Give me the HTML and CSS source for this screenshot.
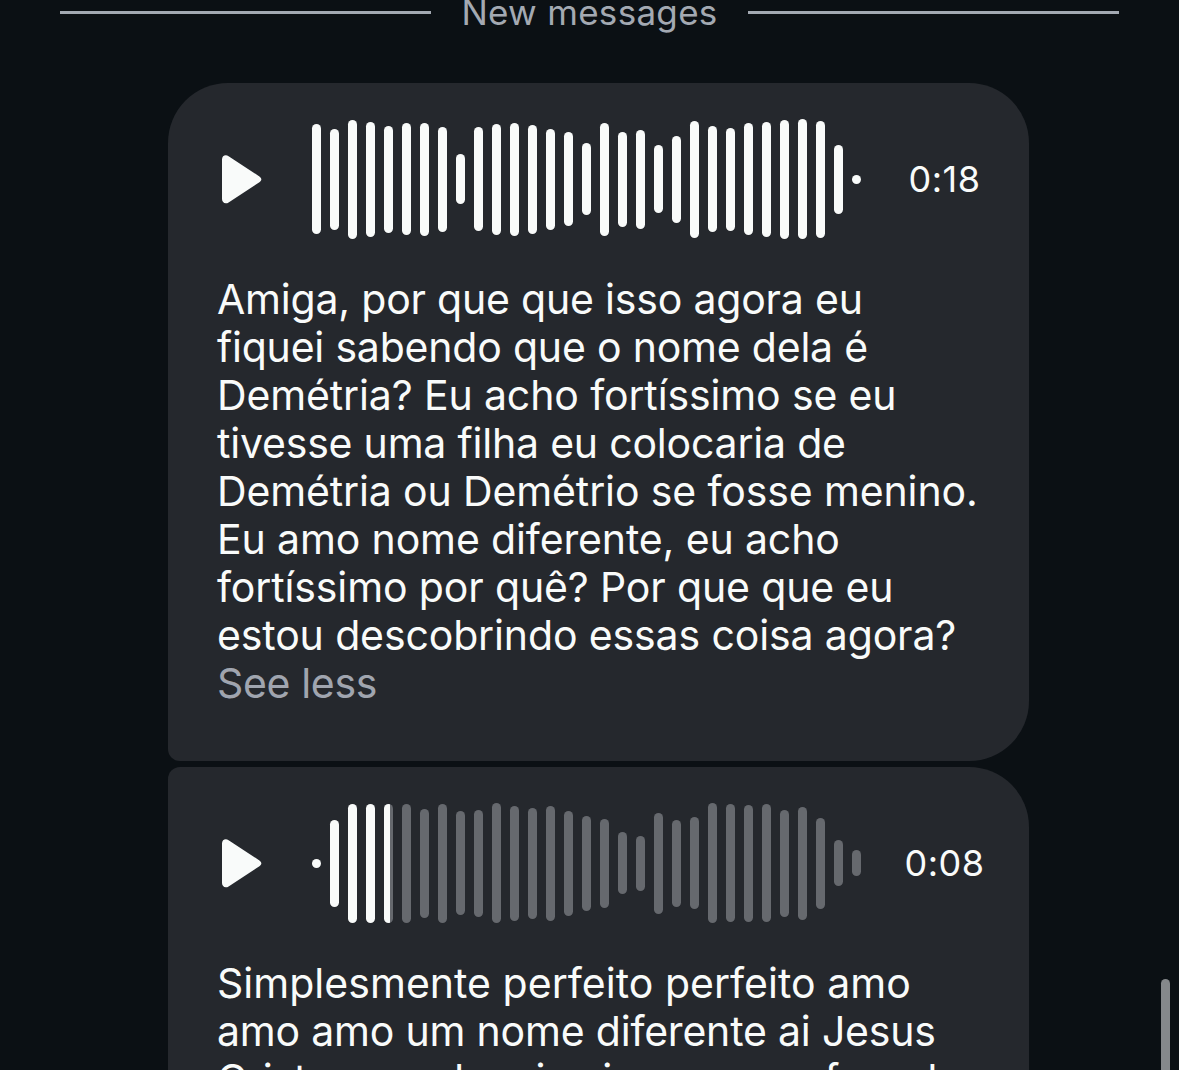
FILE: index.html
```html
<!DOCTYPE html>
<html lang="pt-BR">
<head>
  <meta charset="UTF-8" />
  <meta name="viewport" content="width=device-width, initial-scale=1" />
  <title>Messages</title>
  <link rel="stylesheet" href="styles.css">
</head>
<body>

  <div class="chat">
    <div class="divider">
      <span class="divider-label">New messages</span>
    </div>

    <div class="messages">
      <div class="bubble">
        <div class="player">
          <svg class="play" viewBox="0 0 40 49" aria-label="Play">
            <path d="M0 4.5C0 .6 3.6-.8 6.6 1.2L37.4 21.4C40 23.1 40 25.5 37.4 27.2L6.6 47.4C3.6 49.4 0 48 0 44.1Z" />
          </svg>
          <div class="wave" id="wave1"></div>
          <span class="time">0:18</span>
        </div>
        <p class="transcript">
          <span class="line tight">Amiga, por que que isso agora eu</span>
          <span class="line tight">fiquei sabendo que o nome dela é</span>
          <span class="line">Demétria? Eu acho fortíssimo se eu</span>
          <span class="line tight">tivesse uma filha eu colocaria de</span>
          <span class="line">Demétria ou Demétrio se fosse menino.</span>
          <span class="line">Eu amo nome diferente, eu acho</span>
          <span class="line">fortíssimo por quê? Por que que eu</span>
          <span class="line">estou descobrindo essas coisa agora?</span>
          <span class="line see-less">See less</span>
        </p>
      </div>

      <div class="bubble bubble-next">
        <div class="player">
          <svg class="play" viewBox="0 0 40 49" aria-label="Play">
            <path d="M0 4.5C0 .6 3.6-.8 6.6 1.2L37.4 21.4C40 23.1 40 25.5 37.4 27.2L6.6 47.4C3.6 49.4 0 48 0 44.1Z" />
          </svg>
          <div class="wave" id="wave2"></div>
          <span class="time">0:08</span>
        </div>
        <p class="transcript">
          <span class="line loose">Simplesmente perfeito perfeito amo</span>
          <span class="line tight">amo amo um nome diferente ai Jesus</span>
          <span class="line">Cristo quando mi vai como nos fora de</span>
        </p>
      </div>
    </div>

    <div class="scrollbar"></div>
  </div>

  <script src="script.js"></script>
</body>
</html>
```
FILE: styles.css
```css
body {
  font-family: Inter, "Liberation Sans", sans-serif;
  background: #0b1014;
  margin: 0;
  color: #f9fbfa;
}

.chat {
  position: relative;
  height: 1070px;
  overflow: hidden;
}

.divider {
  display: flex;
  align-items: center;
  gap: 30px;
  height: 25px;
  margin: 0 60px;
}

.divider::before,
.divider::after {
  content: "";
  flex: 1;
  height: 3px;
  background: #a3a9b2;
}

.divider-label {
  font-size: 35px;
  line-height: 25px;
  letter-spacing: 0.3px;
  color: #a3a9b2;
}

.messages {
  display: flex;
  flex-direction: column;
  gap: 6px;
  width: 861px;
  margin: 58px 0 0 168px;
}

.bubble {
  box-sizing: border-box;
  height: 678px;
  padding: 36px 46px 0 49px;
  border-radius: 60px 60px 60px 12px;
  background: #25282d;
}

.bubble-next {
  border-top-left-radius: 12px;
}

.player {
  display: flex;
  align-items: center;
  height: 120px;
}

.play {
  flex-shrink: 0;
  width: 40px;
  height: 49px;
  margin: 0 50px 0 5px;
  fill: #f9fbfa;
}

.wave {
  display: flex;
  flex-shrink: 0;
  align-items: center;
  gap: 9px;
  height: 120px;
}

.bar {
  width: 9px;
  border-radius: 4.5px;
  background: #66696e;
}

.time {
  flex: 1;
  margin: 0 -3px 0 42px;
  text-align: center;
  font-size: 36px;
  letter-spacing: 0.5px;
}

.transcript {
  margin: 36px 0 0;
  font-size: 41px;
  line-height: 48px;
  letter-spacing: -0.13px;
}

.line {
  display: block;
  white-space: nowrap;
}

.tight {
  letter-spacing: -0.2px;
}

.loose {
  letter-spacing: 0.03px;
}

.see-less {
  letter-spacing: -0.35px;
  color: #a0a5af;
}

.scrollbar {
  position: absolute;
  top: 979px;
  right: 9px;
  width: 9px;
  height: 120px;
  border-radius: 5px;
  background: #85888b;
}
```
FILE: script.js
```js
const BAR_STEP = 18;
const BAR_WIDTH = 9;

const first = [110, 101, 119, 115, 107, 112, 113, 105, 50, 104, 111, 113, 109, 101, 94, 72,
  113, 95, 99, 68, 87, 117, 106, 103, 112, 115, 119, 120, 117, 69, 9];
const second = [9, 87, 119, 119, 119, 119, 109, 119, 104, 107, 120, 115, 111, 115, 105, 95,
  89, 62, 55, 101, 87, 92, 120, 118, 117, 118, 107, 113, 91, 46, 26];

// played is the width in px of the part already listened to
function drawWave(id, heights, played) {
  const wave = document.getElementById(id);
  heights.forEach((height, i) => {
    const bar = document.createElement('span');
    const filled = Math.max(0, Math.min(BAR_WIDTH, played - i * BAR_STEP));
    bar.className = 'bar';
    bar.style.height = height + 'px';
    if (filled === BAR_WIDTH) {
      bar.style.background = '#f9fbfa';
    } else if (filled > 0) {
      bar.style.backgroundImage = `linear-gradient(to right, #f9fbfa ${filled}px, transparent ${filled}px)`;
    }
    wave.appendChild(bar);
  });
}

drawWave('wave1', first, 549);
drawWave('wave2', second, 78);
```
